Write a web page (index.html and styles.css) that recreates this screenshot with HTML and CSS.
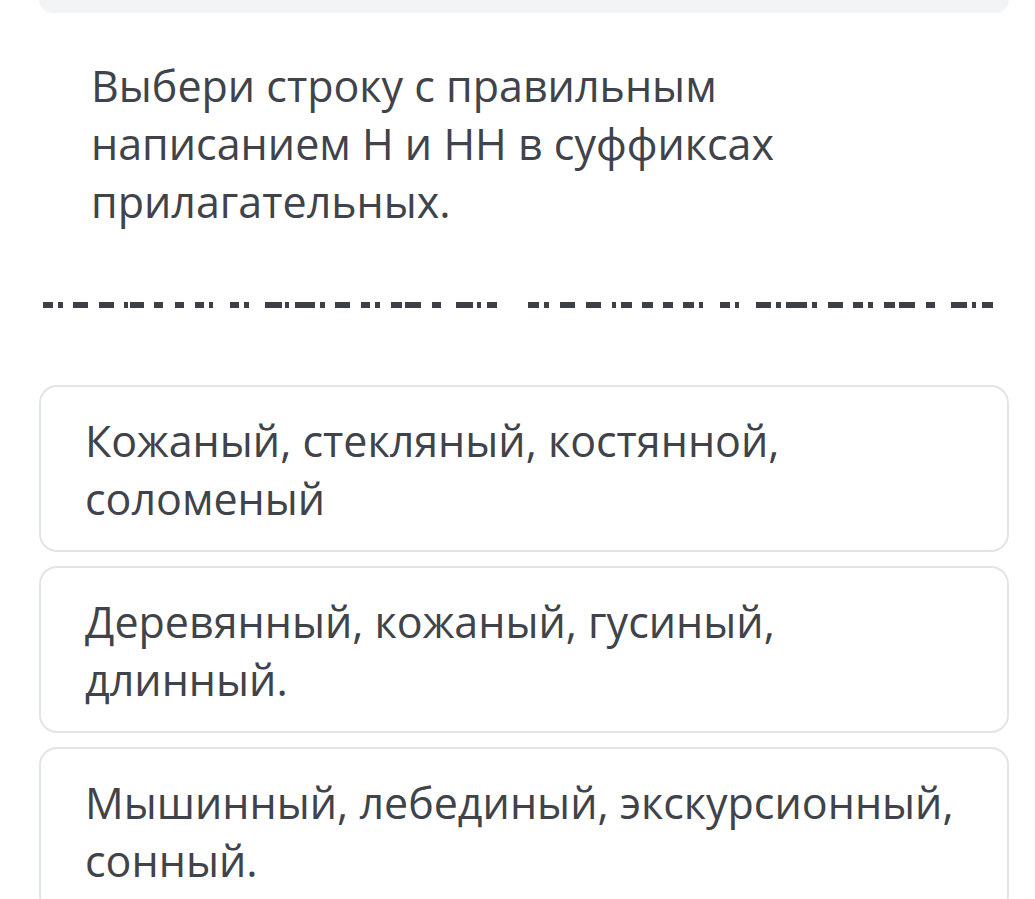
FILE: index.html
```html
<!DOCTYPE html>
<html lang="ru">
<head>
  <meta charset="UTF-8" />
  <meta name="viewport" content="width=device-width, initial-scale=1.0"/>
  <title>Тест</title>
  <link rel="stylesheet" href="styles.css">
</head>
<body>
  <div class="page">
    <div class="top-card"></div>

    <div class="question">
      Выбери строку с правильным написанием Н и НН в суффиксах прилагательных.
    </div>

    <!-- пропуск (замазанный текст) -->
    <div class="blank">
      <svg width="970" height="6" viewBox="0 0 970 6">
        <g fill="#3d4047">
          <rect x="4" y="0" width="10" height="6"/><rect x="19" y="0" width="5" height="6"/>
          <rect x="34" y="0" width="15" height="6"/><rect x="60" y="0" width="15" height="6"/>
          <rect x="85" y="0" width="4" height="6"/><rect x="91" y="0" width="14" height="6"/>
          <rect x="115" y="0" width="9" height="6"/><rect x="136" y="0" width="9" height="6"/>
          <rect x="156" y="0" width="9" height="6"/><rect x="170" y="0" width="4" height="6"/>
          <rect x="191" y="0" width="9" height="6"/><rect x="205" y="0" width="5" height="6"/>
          <rect x="226" y="0" width="17" height="6"/><rect x="246" y="0" width="4" height="6"/>
          <rect x="256" y="0" width="20" height="6"/><rect x="281" y="0" width="5" height="6"/>
          <rect x="296" y="0" width="15" height="6"/><rect x="322" y="0" width="9" height="6"/>
          <rect x="336" y="0" width="5" height="6"/><rect x="352" y="0" width="11" height="6"/>
          <rect x="366" y="0" width="16" height="6"/><rect x="393" y="0" width="9" height="6"/>
          <rect x="417" y="0" width="17" height="6"/><rect x="438" y="0" width="4" height="6"/>
          <rect x="448" y="0" width="10" height="6"/>

          <rect x="489" y="0" width="11" height="6"/><rect x="505" y="0" width="5" height="6"/>
          <rect x="521" y="0" width="15" height="6"/><rect x="547" y="0" width="15" height="6"/>
          <rect x="573" y="0" width="4" height="6"/><rect x="582" y="0" width="11" height="6"/>
          <rect x="603" y="0" width="11" height="6"/><rect x="624" y="0" width="10" height="6"/>
          <rect x="644" y="0" width="11" height="6"/><rect x="660" y="0" width="4" height="6"/>
          <rect x="681" y="0" width="10" height="6"/><rect x="696" y="0" width="4" height="6"/>
          <rect x="717" y="0" width="15" height="6"/><rect x="737" y="0" width="5" height="6"/>
          <rect x="747" y="0" width="21" height="6"/><rect x="773" y="0" width="5" height="6"/>
          <rect x="789" y="0" width="15" height="6"/><rect x="814" y="0" width="10" height="6"/>
          <rect x="829" y="0" width="5" height="6"/><rect x="845" y="0" width="11" height="6"/>
          <rect x="860" y="0" width="16" height="6"/><rect x="887" y="0" width="9" height="6"/>
          <rect x="912" y="0" width="16" height="6"/><rect x="933" y="0" width="4" height="6"/>
          <rect x="943" y="0" width="11" height="6"/>
        </g>
      </svg>
    </div>

    <div class="options">
      <div class="option">Кожаный, стекляный, костянной, соломеный</div>
      <div class="option">Деревянный, кожаный, гусиный, длинный.</div>
      <div class="option">Мышинный, лебединый, экскурсионный, сонный.</div>
    </div>
  </div>
</body>
</html>
```

FILE: styles.css
```css
* {
  box-sizing: border-box;
}
body {
  margin: 0;
  padding: 0;
  font-family: 'Open Sans', sans-serif;
  background-color: #ffffff;
  color: #40434a;
  overflow: hidden;
}
.page {
  padding: 0 26px 0 39px;
}
.top-card {
  height: 13px;
  margin-top: -20px;
  padding-top: 20px;
  box-sizing: content-box;
  background-color: #f3f4f6;
  border-radius: 0 0 14px 14px;
}
.question {
  font-size: 43px;
  line-height: 58px;
  padding: 44px 220px 0 52px;
}
.blank {
  margin-top: 71px;
  height: 6px;
  line-height: 0;
}
.blank svg {
  display: block;
}
.options {
  margin-top: 77px;
  display: flex;
  flex-direction: column;
  gap: 14px;
}
.option {
  border: 2.5px solid #e2e5e8;
  border-radius: 18px;
  font-size: 43px;
  line-height: 58px;
  padding: 25px 40px 22px 44px;
}
```
